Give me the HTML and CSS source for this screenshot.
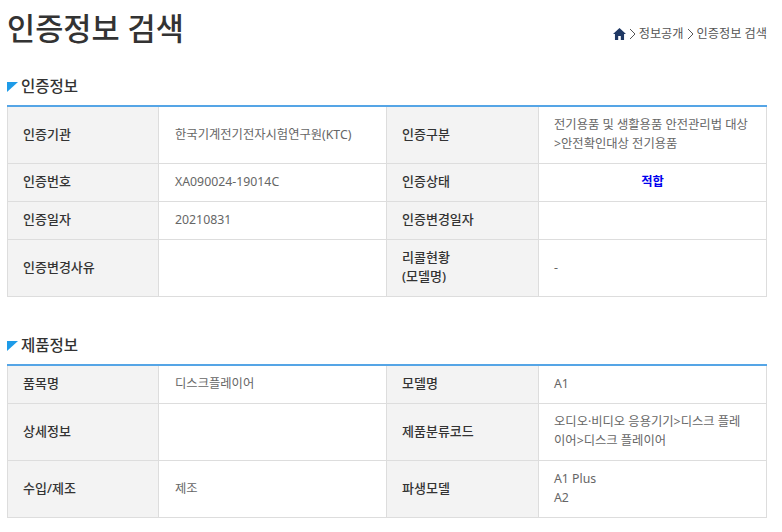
FILE: index.html
```html
<!DOCTYPE html>
<html lang="ko">
<head>
<meta charset="utf-8">
<title>인증정보 검색</title>
<link rel="stylesheet" href="styles.css">
</head>
<body>
<header class="page-head">
  <h1 class="page-title">인증정보 검색</h1>
  <nav class="crumbs">
    <svg class="home" viewBox="0 0 12 11" width="13" height="12"><path d="M6 0 L12 5.6 H10.2 V11 H7.2 V7.4 H4.8 V11 H1.8 V5.6 H0 Z" fill="#1f3864"/></svg>
    <svg class="sep" viewBox="0 0 7 12" width="7" height="12"><path d="M1 1 L6 6 L1 11" fill="none" stroke="#555" stroke-width="1"/></svg>
    <span>정보공개</span>
    <svg class="sep" viewBox="0 0 7 12" width="7" height="12"><path d="M1 1 L6 6 L1 11" fill="none" stroke="#555" stroke-width="1"/></svg>
    <span>인증정보 검색</span>
  </nav>
</header>

<section class="block">
  <h2 class="sec-title"><span class="tri"></span>인증정보</h2>
  <table class="info">
    <colgroup><col class="c1"><col class="c2"><col class="c3"><col></colgroup>
    <tr class="h57"><th>인증기관</th><td>한국기계전기전자시험연구원(KTC)</td><th>인증구분</th><td>전기용품 및 생활용품 안전관리법 대상<br>&gt;안전확인대상 전기용품</td></tr>
    <tr class="h38"><th>인증번호</th><td>XA090024-19014C</td><th>인증상태</th><td class="status">적합</td></tr>
    <tr class="h38"><th>인증일자</th><td>20210831</td><th>인증변경일자</th><td></td></tr>
    <tr class="h57"><th>인증변경사유</th><td></td><th>리콜현황<br>(모델명)</th><td>-</td></tr>
  </table>
</section>

<section class="block second">
  <h2 class="sec-title"><span class="tri"></span>제품정보</h2>
  <table class="info">
    <colgroup><col class="c1"><col class="c2"><col class="c3"><col></colgroup>
    <tr class="h39"><th>품목명</th><td>디스크플레이어</td><th>모델명</th><td>A1</td></tr>
    <tr class="h57"><th>상세정보</th><td></td><th>제품분류코드</th><td>오디오·비디오 응용기기&gt;디스크 플레<br>이어&gt;디스크 플레이어</td></tr>
    <tr class="h57"><th>수입/제조</th><td>제조</td><th>파생모델</th><td>A1 Plus<br>A2</td></tr>
  </table>
</section>
</body>
</html>
```
FILE: styles.css
```css
* { box-sizing: border-box; }
html, body { margin: 0; background: #fff; }
body {
  width: 782px;
  height: 532px;
  overflow: hidden;
  padding: 0 15px 0 7px;
  font-family: "Noto Sans", "Noto Sans CJK KR", sans-serif;
  color: #666;
}
.page-head {
  display: flex;
  justify-content: space-between;
  align-items: flex-start;
  height: 76px;
}
.page-title {
  margin: 5px 0 0;
  font-size: 30.6px;
  line-height: 46px;
  font-weight: 500;
  color: #333;
}
.crumbs {
  display: flex;
  align-items: center;
  gap: 3px;
  margin-top: 24px;
  font-size: 12.2px;
  line-height: 20px;
  color: #555;
}
.sec-title {
  display: flex;
  align-items: center;
  gap: 3px;
  margin: 0;
  height: 29px;
  padding-bottom: 11px;
  font-size: 15.5px;
  font-weight: 500;
  color: #333;
}
.tri {
  width: 0;
  height: 0;
  margin-top: 3px;
  border-top: 10px solid #1e9be8;
  border-right: 11px solid transparent;
}
.second { margin-top: 38px; }
.second .sec-title { padding-bottom: 9px; }
.info {
  width: 760px;
  border-collapse: collapse;
  table-layout: fixed;
  border-top: 2px solid #55a5e6;
  font-size: 12.3px;
  line-height: 19px;
}
.c1 { width: 151px; }
.c2 { width: 228px; }
.c3 { width: 152px; }
.h38 { height: 38px; }
.h39 { height: 39px; }
.h57 { height: 57px; }
.info th, .info td {
  border: 1px solid #ddd;
  padding: 0 0 1px 16px;
  vertical-align: middle;
  text-align: left;
}
.info th { padding-left: 15px; }
.info td:last-child { padding-left: 15px; }
.second .h57 td:last-child { padding-bottom: 3px; }
.info tr:first-child th, .info tr:first-child td { border-top: 0; }
.info th {
  background: #f3f3f3;
  font-weight: 500;
  font-size: 13px;
  color: #333;
}
.info td.status {
  padding-left: 0;
  text-align: center;
  font-weight: 700;
  color: #0000ee;
}
```
